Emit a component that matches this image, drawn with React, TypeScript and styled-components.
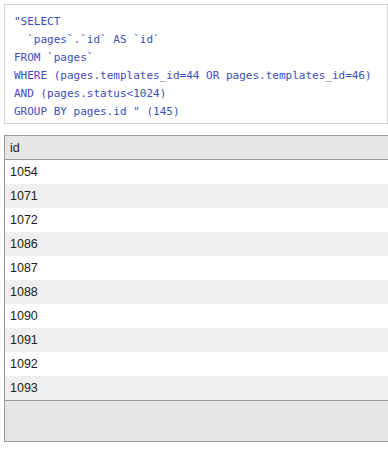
import React from 'react';
import styled, { createGlobalStyle } from 'styled-components';

const ids = [1054, 1071, 1072, 1086, 1087, 1088, 1090, 1091, 1092, 1093];

const sql = `"SELECT
  \`pages\`.\`id\` AS \`id\`
FROM \`pages\`
WHERE (pages.templates_id=44 OR pages.templates_id=46)
AND (pages.status<1024)
GROUP BY pages.id " (145)`;

const GlobalStyle = createGlobalStyle`
  html, body {
    margin: 0;
    padding: 0;
    background: #fff;
    overflow: hidden;
  }
`;

const Page = styled.div`
  padding: 4px 0 0 4px;
  width: 420px;
`;

const Query = styled.pre`
  box-sizing: border-box;
  width: 384px;
  margin: 0;
  padding: 8px 9px 2px;
  border: 1px solid #d4d4d4;
  font-family: 'DejaVu Sans Mono', 'Liberation Mono', monospace;
  font-size: 11px;
  line-height: 18px;
  color: #3b4cc0;
  white-space: pre;
`;

const Table = styled.div`
  margin-top: 11px;
  border: 1px solid #9a9a9a;
  font-family: 'Liberation Sans', Arial, sans-serif;
  font-size: 12.5px;
  color: #222;
`;

const HeaderRow = styled.div`
  height: 23px;
  display: flex;
  align-items: center;
  padding-left: 5px;
  background: #e6e6e6;
  border-bottom: 1px solid #9a9a9a;
`;

const Row = styled.div<{ $odd: boolean }>`
  height: 24px;
  display: flex;
  align-items: center;
  padding-left: 5px;
  background: ${({ $odd }) => ($odd ? '#efefef' : '#fff')};
`;

const Footer = styled.div`
  height: 40px;
  background: #e6e6e6;
  border-top: 1px solid #9a9a9a;
`;

export default function App() {
  return (
    <>
      <GlobalStyle />
      <Page>
        <Query>{sql}</Query>
        <Table>
          <HeaderRow>id</HeaderRow>
          {ids.map((id, i) => (
            <Row key={id} $odd={i % 2 === 1}>
              {id}
            </Row>
          ))}
          <Footer />
        </Table>
      </Page>
    </>
  );
}
